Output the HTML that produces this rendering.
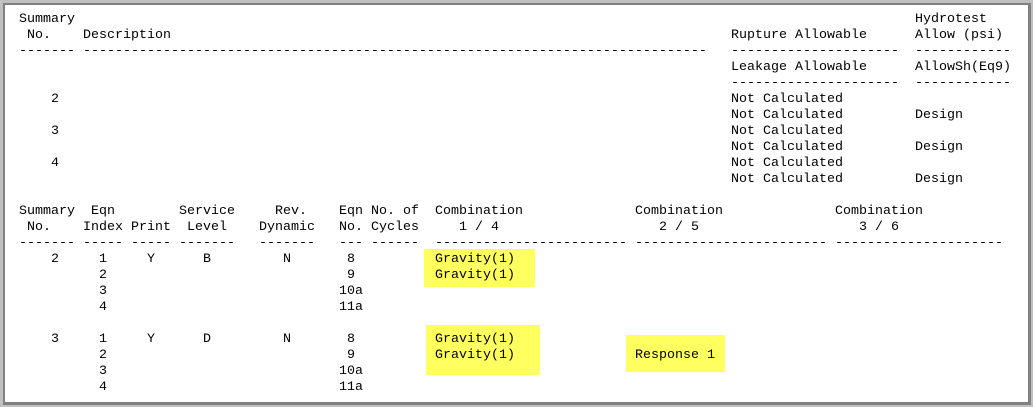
<!DOCTYPE html>
<html><head><meta charset="utf-8"><style>
html,body{margin:0;padding:0;background:#fff;}
.frame{position:absolute;left:0;top:0;width:1033px;height:407px;box-sizing:border-box;background:#c0c0c0;}
.in1{position:absolute;left:3px;top:3px;right:2px;bottom:2px;background:#808080;}
.in2{position:absolute;left:5px;top:5px;right:5px;bottom:5px;background:#fff;}
.t{position:absolute;left:19px;top:12px;font-family:"Liberation Mono",monospace;font-size:13.33px;line-height:16px;color:#000;white-space:pre;}
.t span{position:absolute;}
.y{position:absolute;background:#ffff5f;}
</style></head><body>
<div class="frame"><div class="in1"></div><div class="in2"></div></div>
<div class="y" style="left:424px;top:249px;width:111px;height:38px"></div>
<div class="y" style="left:426px;top:325px;width:114px;height:50px"></div>
<div class="y" style="left:626px;top:335px;width:99px;height:37px"></div>
<div class="t">
<span style="top:0px;left:0px">Summary</span><span style="top:0px;left:896px">Hydrotest</span>
<span style="top:16px;left:8px">No.</span><span style="top:16px;left:64px">Description</span><span style="top:16px;left:712px">Rupture Allowable</span><span style="top:16px;left:896px">Allow (psi)</span>
<span style="top:32px;left:0px">-------</span><span style="top:32px;left:64px">------------------------------------------------------------------------------</span><span style="top:32px;left:712px">---------------------</span><span style="top:32px;left:896px">------------</span>
<span style="top:48px;left:712px">Leakage Allowable</span><span style="top:48px;left:896px">AllowSh(Eq9)</span>
<span style="top:64px;left:712px">---------------------</span><span style="top:64px;left:896px">------------</span>
<span style="top:80px;left:32px">2</span><span style="top:80px;left:712px">Not Calculated</span>
<span style="top:96px;left:712px">Not Calculated</span><span style="top:96px;left:896px">Design</span>
<span style="top:112px;left:32px">3</span><span style="top:112px;left:712px">Not Calculated</span>
<span style="top:128px;left:712px">Not Calculated</span><span style="top:128px;left:896px">Design</span>
<span style="top:144px;left:32px">4</span><span style="top:144px;left:712px">Not Calculated</span>
<span style="top:160px;left:712px">Not Calculated</span><span style="top:160px;left:896px">Design</span>

<span style="top:192px;left:0px">Summary</span><span style="top:192px;left:72px">Eqn</span><span style="top:192px;left:160px">Service</span><span style="top:192px;left:256px">Rev.</span><span style="top:192px;left:320px">Eqn</span><span style="top:192px;left:352px">No. of</span><span style="top:192px;left:416px">Combination</span><span style="top:192px;left:616px">Combination</span><span style="top:192px;left:816px">Combination</span>
<span style="top:208px;left:8px">No.</span><span style="top:208px;left:64px">Index</span><span style="top:208px;left:112px">Print</span><span style="top:208px;left:168px">Level</span><span style="top:208px;left:240px">Dynamic</span><span style="top:208px;left:320px">No.</span><span style="top:208px;left:352px">Cycles</span><span style="top:208px;left:440px">1 / 4</span><span style="top:208px;left:640px">2 / 5</span><span style="top:208px;left:840px">3 / 6</span>
<span style="top:224px;left:0px">-------</span><span style="top:224px;left:64px">-----</span><span style="top:224px;left:112px">-----</span><span style="top:224px;left:160px">-------</span><span style="top:224px;left:240px">-------</span><span style="top:224px;left:320px">---</span><span style="top:224px;left:352px">------</span><span style="top:224px;left:416px">------------------------</span><span style="top:224px;left:616px">------------------------</span><span style="top:224px;left:816px">---------------------</span>
<span style="top:240px;left:32px">2</span><span style="top:240px;left:80px">1</span><span style="top:240px;left:128px">Y</span><span style="top:240px;left:184px">B</span><span style="top:240px;left:264px">N</span><span style="top:240px;left:328px">8</span><span style="top:240px;left:416px">Gravity(1)</span>
<span style="top:256px;left:80px">2</span><span style="top:256px;left:328px">9</span><span style="top:256px;left:416px">Gravity(1)</span>
<span style="top:272px;left:80px">3</span><span style="top:272px;left:320px">10a</span>
<span style="top:288px;left:80px">4</span><span style="top:288px;left:320px">11a</span>
<span style="top:320px;left:32px">3</span><span style="top:320px;left:80px">1</span><span style="top:320px;left:128px">Y</span><span style="top:320px;left:184px">D</span><span style="top:320px;left:264px">N</span><span style="top:320px;left:328px">8</span><span style="top:320px;left:416px">Gravity(1)</span>
<span style="top:336px;left:80px">2</span><span style="top:336px;left:328px">9</span><span style="top:336px;left:416px">Gravity(1)</span><span style="top:336px;left:616px">Response 1</span>
<span style="top:352px;left:80px">3</span><span style="top:352px;left:320px">10a</span>
<span style="top:368px;left:80px">4</span><span style="top:368px;left:320px">11a</span>
</div>
</body></html>
